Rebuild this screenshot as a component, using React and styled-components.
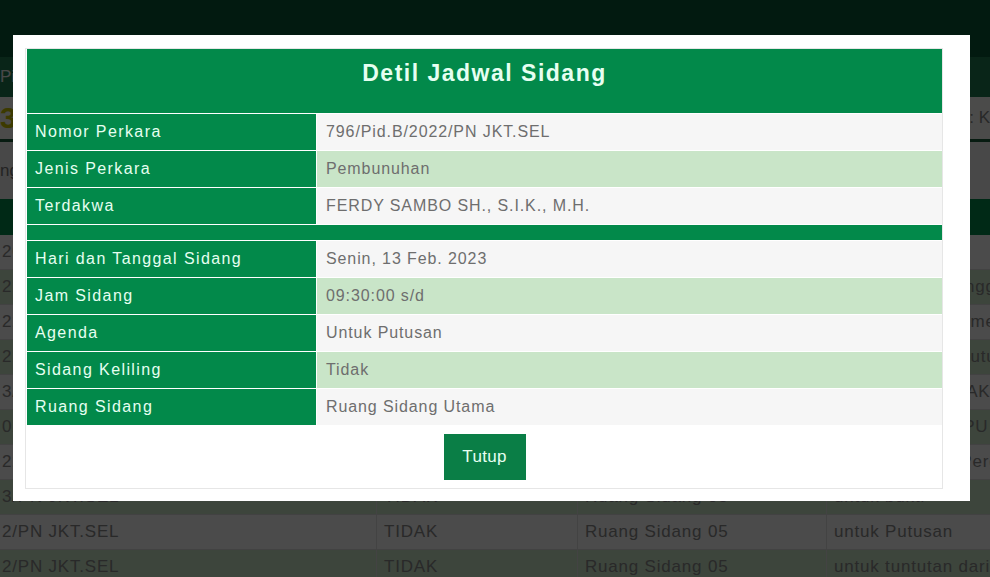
import React from "react";
import styled, { createGlobalStyle } from "styled-components";

const GlobalStyle = createGlobalStyle`
  html, body { margin: 0; padding: 0; overflow: hidden; }
  body { font-family: "Liberation Sans", Arial, sans-serif; background: #ffffff; }
  * { box-sizing: border-box; }
`;

/* ---------- background page ---------- */
const Page = styled.div`
  width: 990px;
  height: 577px;
  display: flex;
  flex-direction: column;
  overflow: hidden;
`;

const TopBar = styled.div`
  height: 57px;
  flex: none;
  background: #075736;
`;

const NavBar = styled.div`
  height: 40px;
  flex: none;
  background: #1f7d50;
  color: #f2f2f2;
  font-size: 17px;
  display: flex;
  align-items: center;
  padding-left: 0;
`;

const InfoBar = styled.div`
  height: 45px;
  flex: none;
  background: #fbfbf8;
  border-bottom: 3px solid #1a5a3a;
  display: flex;
  align-items: center;
  justify-content: space-between;
  font-size: 17px;
  color: #888;
`;

const BigNumber = styled.span`
  font-size: 30px;
  font-weight: bold;
  color: #c9c400;
`;

const SearchBar = styled.div`
  height: 57px;
  flex: none;
  background: #f2f2f2;
  display: flex;
  align-items: center;
  font-size: 17px;
  color: #777;
`;

const BgTable = styled.div`
  display: flex;
  flex-direction: column;
`;

const BgHead = styled.div`
  height: 36px;
  flex: none;
  background: #008a4b;
`;

const BgRow = styled.div`
  height: 35px;
  flex: none;
  display: grid;
  grid-template-columns: 376px 201px 249px 1fr;
  background: ${(p) => (p.$alt ? "#cbe6c9" : "#fafafa")};
  border-bottom: 1px solid #dcdcdc;
  font-size: 17px;
  letter-spacing: 0.8px;
  color: #8a8a8a;
`;

const BgCell = styled.div`
  display: flex;
  align-items: center;
  padding-left: ${(p) => (p.$first ? "2px" : "7px")};
  border-left: ${(p) => (p.$first ? "none" : "1px solid #e2e2e2")};
  white-space: nowrap;
  overflow: hidden;
`;

/* ---------- modal ---------- */
const Overlay = styled.div`
  position: fixed;
  inset: 0;
  background: rgba(0, 0, 0, 0.7);
  display: flex;
  align-items: flex-start;
`;

const Modal = styled.div`
  margin: 35px 0 0 13px;
  width: 957px;
  height: 466px;
  background: #ffffff;
  padding: 13px 27px 12px 12px;
`;

const Panel = styled.div`
  border: 1px solid #e6e6e6;
  padding: 0 0 8px 1px;
  display: flex;
  flex-direction: column;
  align-items: stretch;
`;

const DetailGrid = styled.div`
  display: grid;
  grid-template-columns: 289px 1fr;
  gap: 1px;
  background: #ffffff;
`;

const Title = styled.div`
  grid-column: 1 / -1;
  height: 64px;
  background: #02894a;
  color: #e6fff1;
  font-size: 23px;
  font-weight: bold;
  letter-spacing: 1.5px;
  text-align: center;
  padding-top: 10px;
  line-height: 28px;
`;

const Divider = styled.div`
  grid-column: 1 / -1;
  height: 15px;
  background: #02894a;
`;

const Label = styled.div`
  height: 36px;
  background: #02894a;
  color: #e6fff1;
  font-size: 16px;
  letter-spacing: 1.4px;
  display: flex;
  align-items: center;
  padding-left: 8px;
`;

const Value = styled.div`
  height: 36px;
  background: ${(p) => (p.$alt ? "#c9e5c8" : "#f6f6f6")};
  color: #6e6e6e;
  font-size: 16px;
  letter-spacing: 0.9px;
  display: flex;
  align-items: center;
  padding-left: 9px;
`;

const Footer = styled.div`
  display: flex;
  justify-content: center;
  padding-top: 9px;
`;

const CloseButton = styled.button`
  width: 82px;
  height: 46px;
  border: none;
  background: #0a7e46;
  color: #e6fff1;
  font-family: "Liberation Sans", Arial, sans-serif;
  font-size: 17px;
  letter-spacing: 0.3px;
  padding: 0;
  cursor: pointer;
`;

const bgRows = [
  ["2022/PN JKT.SEL", "TIDAK", "Ruang Sidang 05", "untuk Putusan"],
  ["22/PN JKT.SEL", "TIDAK", "Ruang Sidang 05", "untuk Saksi & Anggota Polri"],
  ["22/PN JKT.SEL", "TIDAK", "Ruang Sidang 05", "untuk saksi dari meringankan"],
  ["22/PN JKT.SEL", "TIDAK", "Ruang Sidang 05", "untuk Duplik & putusan"],
  ["3/PN JKT.SEL", "TIDAK", "Ruang Sidang 05", "untuk Bacaan DAKWAAN"],
  ["02/PN JKT.SEL", "TIDAK", "Ruang Sidang 05", "untuk Saksi & JPU"],
  ["22/PN JKT.SEL", "TIDAK", "Ruang Sidang 05", "untuk Replik & Pergantian"],
  ["3/PN JKT.SEL", "TIDAK", "Ruang Sidang 05", "untuk bukti"],
  ["2/PN JKT.SEL", "TIDAK", "Ruang Sidang 05", "untuk Putusan"],
  ["2/PN JKT.SEL", "TIDAK", "Ruang Sidang 05", "untuk tuntutan dari JPU"],
];

const details = [
  ["Nomor Perkara", "796/Pid.B/2022/PN JKT.SEL"],
  ["Jenis Perkara", "Pembunuhan"],
  ["Terdakwa", "FERDY SAMBO SH., S.I.K., M.H."],
];

const schedule = [
  ["Hari dan Tanggal Sidang", "Senin, 13 Feb. 2023"],
  ["Jam Sidang", "09:30:00 s/d"],
  ["Agenda", "Untuk Putusan"],
  ["Sidang Keliling", "Tidak"],
  ["Ruang Sidang", "Ruang Sidang Utama"],
];

export default function App() {
  return (
    <>
      <GlobalStyle />
      <Page>
        <TopBar />
        <NavBar>Pidana</NavBar>
        <InfoBar>
          <BigNumber>3</BigNumber>
          <span>: K</span>
        </InfoBar>
        <SearchBar>ng</SearchBar>
        <BgTable>
          <BgHead />
          {bgRows.map((r, i) => (
            <BgRow key={i} $alt={i % 2 === 1}>
              {r.map((c, j) => (
                <BgCell key={j} $first={j === 0}>
                  {c}
                </BgCell>
              ))}
            </BgRow>
          ))}
        </BgTable>
      </Page>
      <Overlay>
        <Modal>
          <Panel>
            <DetailGrid>
              <Title>Detil Jadwal Sidang</Title>
              {details.map(([l, v], i) => (
                <React.Fragment key={l}>
                  <Label>{l}</Label>
                  <Value $alt={i % 2 === 1}>{v}</Value>
                </React.Fragment>
              ))}
              <Divider />
              {schedule.map(([l, v], i) => (
                <React.Fragment key={l}>
                  <Label>{l}</Label>
                  <Value $alt={i % 2 === 1}>{v}</Value>
                </React.Fragment>
              ))}
            </DetailGrid>
            <Footer>
              <CloseButton>Tutup</CloseButton>
            </Footer>
          </Panel>
        </Modal>
      </Overlay>
    </>
  );
}
